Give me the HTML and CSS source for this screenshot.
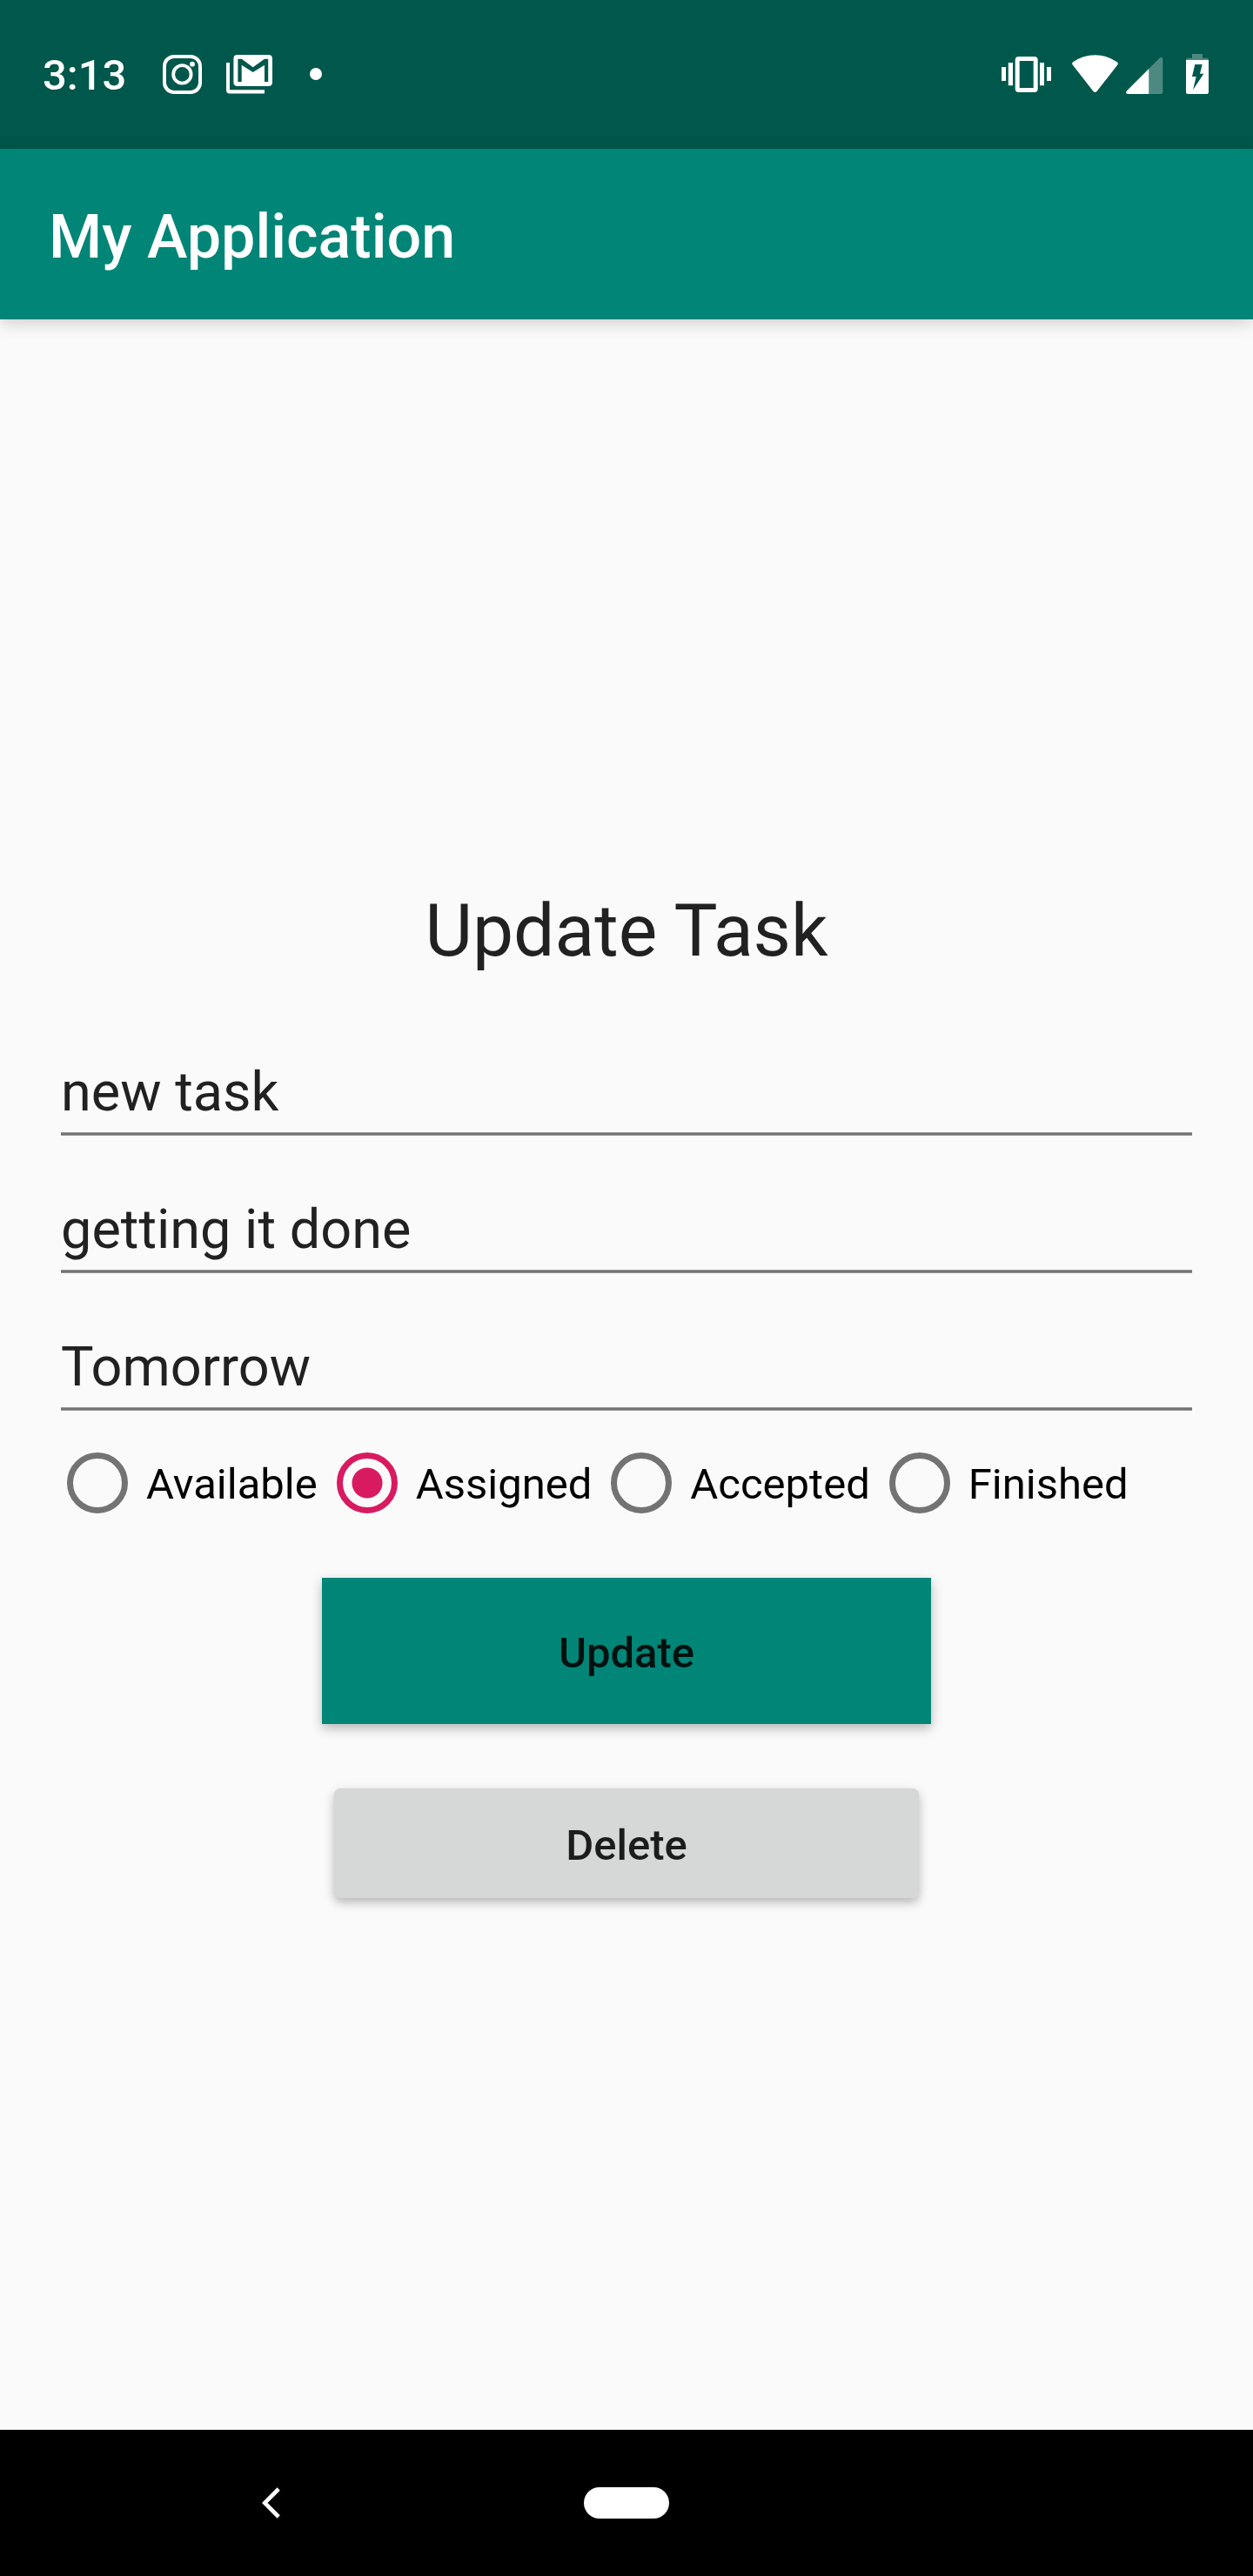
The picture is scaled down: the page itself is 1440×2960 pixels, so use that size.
FILE: index.html
```html
<!DOCTYPE html>
<html lang="en">
<head>
<meta charset="utf-8">
<meta name="viewport" content="width=device-width, initial-scale=1">
<title>My Application</title>
<link rel="stylesheet" href="styles.css">
</head>
<body>
<div class="status-bar">
  <time class="clock">3:13</time>
  <div class="notifications">
    <svg width="46" height="46" viewBox="0 0 46 46" aria-hidden="true">
      <rect x="2" y="3" width="41" height="41" rx="11" fill="none" stroke="#fff" stroke-width="4"/>
      <circle cx="22.4" cy="23.4" r="10.2" fill="none" stroke="#fff" stroke-width="3.8"/>
      <circle cx="34" cy="11.7" r="2.9" fill="#fff"/>
    </svg>
    <svg width="54" height="46" viewBox="0 0 54 46" aria-hidden="true">
      <path fill="#fff" d="M0 10H4V41.3H44V45.6H4Q0 45.6 0 41.6Z"/>
      <path fill="#fff" fill-rule="evenodd" d="M12.8 1H48.6Q53 1 53 5.4V32.6Q53 37 48.6 37H12.8Q8.4 37 8.4 32.6V5.4Q8.4 1 12.8 1ZM13.4 5.7V32H17.7V12.8L30.7 21L44 12.8V32H48.2V5.7H44L30.7 15.2L17.7 5.7Z"/>
    </svg>
  </div>
  <span class="more-dot"></span>
  <div class="system">
    <svg width="58" height="46" viewBox="0 0 58 46" aria-hidden="true">
      <path fill="#fff" d="M0 15H5V31H0ZM7.8 10H13V36.3H7.8ZM44 10H49V36.3H44ZM52 15H57V31H52Z"/>
      <rect x="18.2" y="5.5" width="21" height="36" rx="1.5" fill="none" stroke="#fff" stroke-width="5"/>
    </svg>
    <svg class="wifi" width="54" height="46" viewBox="0 0 54 46" aria-hidden="true">
      <path fill="#fff" d="M.7 12.6Q-.6 10.7 1.2 9.3Q12.5 1.3 26.5 1.3T51.8 9.3Q53.6 10.7 52.3 12.6L28.7 42.8Q26.5 45.2 24.3 42.8Z"/>
    </svg>
    <svg class="signal" width="43" height="46" viewBox="0 0 43 46" aria-hidden="true">
      <path fill="#fff" fill-opacity=".3" d="M26.3 17L38.8 4.6Q42.3 2.4 42.3 6V44Q42.3 46 40.3 46H26.3Z"/>
      <path fill="#fff" d="M26.3 17V46H2Q-.6 45.6 .6 42.7Z"/>
    </svg>
    <svg class="battery" width="26" height="46" viewBox="0 0 26 46" aria-hidden="true">
      <path fill="#fff" fill-opacity=".3" d="M7 0H19V4.7H24Q26 4.7 26 7H0Q0 4.7 2 4.7H7Z"/>
      <path fill="#fff" fill-rule="evenodd" d="M0 7H26V44Q26 46 24 46H2Q0 46 0 44ZM10.3 12L7 26H11.7L8 41.3L20.3 22.7H16L18.7 12Z"/>
    </svg>
  </div>
</div>
<header class="app-bar">
  <h1 class="app-title">My Application</h1>
</header>
<main class="content">
  <form class="task-form">
    <h2 class="form-title">Update Task</h2>
    <div class="fields">
      <input class="field" type="text" aria-label="Title" value="new task">
      <input class="field" type="text" aria-label="Description" value="getting it done">
      <input class="field" type="text" aria-label="Due" value="Tomorrow">
    </div>
    <div class="states" role="radiogroup" aria-label="State">
      <label class="state"><input class="radio" type="radio" name="state">Available</label>
      <label class="state"><input class="radio" type="radio" name="state" checked>Assigned</label>
      <label class="state"><input class="radio" type="radio" name="state">Accepted</label>
      <label class="state"><input class="radio" type="radio" name="state">Finished</label>
    </div>
    <div class="actions">
      <button class="button update" type="button">Update</button>
      <button class="button delete" type="button">Delete</button>
    </div>
  </form>
</main>
<nav class="nav-bar">
  <button class="back" type="button" aria-label="Back">
    <svg width="22" height="36" viewBox="0 0 22 36" aria-hidden="true">
      <path d="M19.2 2L3.2 18L19.2 34" fill="none" stroke="#fff" stroke-width="4.6"/>
    </svg>
  </button>
  <button class="home" type="button" aria-label="Home"></button>
</nav>
</body>
</html>
```

FILE: styles.css
```css
* {
  box-sizing: border-box;
}

body {
  margin: 0;
  min-height: 100vh;
  display: flex;
  flex-direction: column;
  background: #fafafa;
  color: rgba(0, 0, 0, 0.87);
  font-family: Roboto, "Liberation Sans", sans-serif;
}

svg {
  display: block;
}

/* Status bar */
.status-bar {
  display: flex;
  align-items: flex-start;
  height: 171px;
  padding: 62px 51px 0 49px;
  background: #00574b;
  color: #fff;
}

.clock {
  font-size: 49px;
  line-height: 50px;
  font-weight: 500;
}

.notifications {
  display: flex;
  gap: 27px;
  margin-left: 42px;
}

.more-dot {
  width: 14px;
  height: 14px;
  margin: 16px 0 0 42px;
  border-radius: 50%;
  background: #fff;
}

.system {
  display: flex;
  margin-left: auto;
}

.wifi {
  margin-left: 23px;
}

.signal {
  margin-left: 8px;
}

.battery {
  margin-left: 26px;
}

/* App bar */
.app-bar {
  display: flex;
  align-items: center;
  height: 196px;
  padding: 6px 56px 0;
  background: #008577;
  color: #fff;
  box-shadow: 0 4px 18px rgba(0, 0, 0, 0.18);
}

.app-title {
  margin: 0;
  font-size: 70px;
  line-height: 82px;
  font-weight: 500;
}

/* Form */
.content {
  flex: 1;
  display: flex;
  flex-direction: column;
  justify-content: center;
}

.task-form {
  padding: 43px 56px 0;
}

.form-title {
  margin: 0 0 98px;
  font-size: 84px;
  line-height: 98px;
  font-weight: 400;
  text-align: center;
}

.fields {
  display: flex;
  flex-direction: column;
  gap: 70px;
  padding: 0 14px;
}

.field {
  width: 100%;
  height: 88px;
  padding: 0 0 14px;
  border: 0;
  border-radius: 0;
  outline: 0;
  background: linear-gradient(#949494 25%, #737373 25% 75%, #949494 75%) bottom / 100% 4px no-repeat;
  color: inherit;
  font: 400 63px/74px Roboto, "Liberation Sans", sans-serif;
}

.states {
  display: flex;
  gap: 1px;
  margin-top: 48px;
}

.state {
  display: flex;
  align-items: flex-start;
  gap: 21px;
  padding-left: 21px;
  color: #000;
  font-size: 49px;
  line-height: 74px;
}

.radio {
  appearance: none;
  flex: none;
  width: 70px;
  height: 70px;
  margin: 0;
  border: 7px solid #737373;
  border-radius: 50%;
}

.radio:checked {
  border-color: #d81b60;
  background: radial-gradient(circle, #d81b60 17px, transparent 18px);
}

.actions {
  display: flex;
  flex-direction: column;
  align-items: center;
  gap: 74px;
  margin-top: 70px;
}

.button {
  padding: 6px 0 0;
  border: 0;
  color: inherit;
  font: 500 49px/58px Roboto, "Liberation Sans", sans-serif;
  box-shadow: 0 5px 12px rgba(0, 0, 0, 0.27);
}

.update {
  width: 700px;
  height: 168px;
  background: #008577;
}

.delete {
  width: 672px;
  height: 126px;
  border-radius: 7px;
  background: #d6d7d7;
}

/* Navigation bar */
.nav-bar {
  display: grid;
  grid-template-columns: 1fr 98px 1fr;
  align-items: center;
  height: 168px;
  background: #000;
}

.back {
  justify-self: start;
  margin-left: 260px;
  padding: 41px;
  border: 0;
  background: none;
}

.home {
  height: 36px;
  padding: 0;
  border: 0;
  border-radius: 18px;
  background: #fff;
}
```
